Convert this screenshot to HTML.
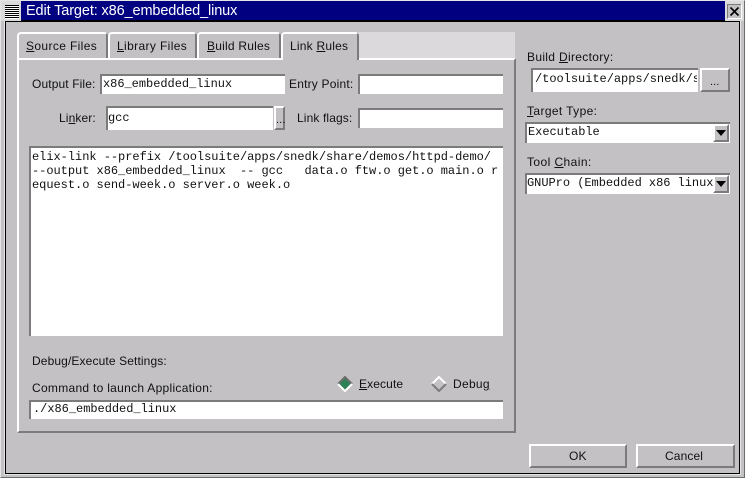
<!DOCTYPE html>
<html><head><meta charset="utf-8"><style>
html,body{margin:0;padding:0;width:745px;height:478px;overflow:hidden;background:#c3c1c4}
*{box-sizing:border-box}
.a{position:absolute}
.l{position:absolute;font:12px/14px "Liberation Sans",sans-serif;color:#111;white-space:pre;letter-spacing:.12px}
.l u{text-underline-offset:1px}
.m{position:absolute;font:12px/14px "Liberation Mono",monospace;color:#111;white-space:pre;overflow:hidden;letter-spacing:-.03px}
.in{position:absolute;background:#fff;border-top:2px solid #7c7b7c;border-left:2px solid #7c7b7c}
.btn{position:absolute;background:#c3c1c4;border:2px solid;border-color:#fff #7c7b7c #7c7b7c #fff}
.tab{position:absolute;top:32px;height:27px;background:#c3c1c4;border-top:2px solid #fff;border-left:2px solid #fff;border-right:2px solid #7c7b7c;border-radius:4px 4px 0 0}
.arr{position:absolute;width:0;height:0;border-left:5px solid transparent;border-right:5px solid transparent;border-top:6px solid #000}
</style></head><body>
<!-- window frame -->
<div class="a" style="left:0;top:0;width:745px;height:478px;border:1px solid #e6e5e6;border-right-color:#6e6d6e;border-bottom-color:#6e6d6e"></div>
<div class="a" style="left:4px;top:20px;width:737px;height:455px;border:1px solid #e6e5e6"></div>
<div class="a" style="left:5px;top:20px;width:735px;height:454px;border:1px solid #000;border-top-width:2px;background:#c3c1c4"></div>
<!-- title -->
<div class="a" style="left:21px;top:1px;width:704px;height:19px;background:#000080"></div>
<div class="l" style="left:26px;top:3px;font-size:14.5px;line-height:17px;color:#fff;letter-spacing:-.12px">Edit Target: x86_embedded_linux</div>
<!-- sys icon -->
<svg class="a" style="left:1px;top:1px" width="20" height="20"><rect width="20" height="20" fill="#dcdbdc"/><rect x="4" y="4" width="14" height="14" fill="#fff"/><path d="M4 4.5h14M4 6.5h14M4 8.5h14M4 10.5h14M4 12.5h14M4 14.5h14M4 16.5h14" stroke="#000" stroke-width="1"/></svg>
<!-- close -->
<svg class="a" style="left:725px;top:1px" width="19" height="20"><rect width="19" height="20" fill="#dcdbdc"/><rect x="2.5" y="3.5" width="14" height="14" fill="#c3c1c4" stroke="#fff"/><path d="M2.5 17.5V3.5H16" stroke="#7c7b7c" fill="none"/><path d="M5.5 6.5l8 8M13.5 6.5l-8 8" stroke="#000" stroke-width="1.6"/></svg>

<!-- panel -->
<div class="a" style="left:358px;top:32px;width:157px;height:27px;background:#dcd9dc"></div>
<div class="a" style="left:17px;top:58px;width:499px;height:375px;border:2px solid;border-color:#fff #7c7b7c #7c7b7c #fff;background:#c3c1c4"></div>
<!-- tabs -->
<div class="tab" style="left:17px;width:91px;height:26px"></div>
<div class="tab" style="left:108px;width:89px;height:26px"></div>
<div class="tab" style="left:197px;width:84px;height:26px"></div>
<div class="tab" style="left:281px;width:78px;height:28px;z-index:2"></div>
<div class="a" style="left:283px;top:57px;width:74px;height:4px;background:#c3c1c4;z-index:3"></div>
<div class="l" style="left:26px;top:39px;z-index:4;letter-spacing:.37px"><u>S</u>ource Files</div>
<div class="l" style="left:117px;top:39px;z-index:4;letter-spacing:.37px"><u>L</u>ibrary Files</div>
<div class="l" style="left:207px;top:39px;z-index:4;letter-spacing:.22px"><u>B</u>uild Rules</div>
<div class="l" style="left:290px;top:39px;z-index:4;letter-spacing:.22px">Link <u>R</u>ules</div>

<!-- row 1 -->
<div class="l" style="left:32px;top:77px">Output File:</div>
<div class="in" style="left:100px;top:74px;width:185px;height:20px"></div>
<div class="m" style="left:103px;top:77px">x86_embedded_linux</div>
<div class="l" style="left:289px;top:77px;letter-spacing:.2px">Entry Point:</div>
<div class="in" style="left:358px;top:74px;width:145px;height:20px"></div>
<!-- row 2 -->
<div class="l" style="left:59px;top:111px">Li<u>n</u>ker:</div>
<div class="in" style="left:106px;top:106px;width:167px;height:24px"></div>
<div class="m" style="left:108px;top:111px">gcc</div>
<div class="btn" style="left:274px;top:106px;width:11px;height:24px"></div>
<div class="l" style="left:276px;top:113px;font-size:11px">...</div>
<div class="l" style="left:297px;top:111px">Link flags:</div>
<div class="in" style="left:358px;top:108px;width:145px;height:20px"></div>
<!-- textarea -->
<div class="in" style="left:29px;top:146px;width:474px;height:190px"></div>
<div class="m" style="left:32px;top:150px">elix-link --prefix /toolsuite/apps/snedk/share/demos/httpd-demo/</div>
<div class="m" style="left:32px;top:164px">--output x86_embedded_linux  -- gcc   data.o ftw.o get.o main.o r</div>
<div class="m" style="left:32px;top:178px">equest.o send-week.o server.o week.o</div>
<!-- debug -->
<div class="l" style="left:32px;top:354px">Debug/Execute Settings:</div>
<div class="l" style="left:32px;top:381px;letter-spacing:.29px">Command to launch Application:</div>
<div class="in" style="left:29px;top:400px;width:474px;height:19px"></div>
<div class="m" style="left:33px;top:402px">./x86_embedded_linux</div>
<svg class="a" style="left:337px;top:376px" width="16" height="16"><path d="M8 1L15 8 8 15 1 8Z" fill="#2e8057"/><path d="M1 8L8 1 15 8" fill="none" stroke="#6e6d6e" stroke-width="2"/><path d="M1 8L8 15 15 8" fill="none" stroke="#fff" stroke-width="2"/></svg>
<div class="l" style="left:359px;top:377px"><u>E</u>xecute</div>
<svg class="a" style="left:431px;top:376px" width="16" height="16"><path d="M8 1L15 8 8 15 1 8Z" fill="#c3c1c4"/><path d="M1 8L8 1 15 8" fill="none" stroke="#fff" stroke-width="2"/><path d="M1 8L8 15 15 8" fill="none" stroke="#7c7b7c" stroke-width="2"/></svg>
<div class="l" style="left:453px;top:377px;letter-spacing:.3px">Debu<u>g</u></div>

<!-- right -->
<div class="l" style="left:527px;top:50px;letter-spacing:.32px">Build <u>D</u>irectory:</div>
<div class="in" style="left:531px;top:68px;width:167px;height:24px"></div>
<div class="m" style="left:535px;top:72px;width:162px">/toolsuite/apps/snedk/share</div>
<div class="btn" style="left:700px;top:68px;width:30px;height:24px"></div>
<div class="l" style="left:710px;top:75px;font-size:11px">...</div>
<div class="l" style="left:527px;top:104px;letter-spacing:.38px"><u>T</u>arget Type:</div>
<div class="in" style="left:525px;top:122px;width:205px;height:21px"></div>
<div class="m" style="left:528px;top:125px">Executable</div>
<div class="btn" style="left:713px;top:124px;width:16px;height:18px"></div>
<div class="arr" style="left:716px;top:130px"></div>
<div class="l" style="left:527px;top:155px;letter-spacing:.42px">Tool <u>C</u>hain:</div>
<div class="in" style="left:525px;top:173px;width:205px;height:21px"></div>
<div class="m" style="left:527px;top:176px;width:186px">GNUPro (Embedded x86 linux)</div>
<div class="btn" style="left:713px;top:175px;width:16px;height:18px"></div>
<div class="arr" style="left:716px;top:181px"></div>

<!-- buttons -->
<div class="btn" style="left:529px;top:444px;width:98px;height:24px"></div>
<div class="l" style="left:569px;top:449px">OK</div>
<div class="btn" style="left:636px;top:444px;width:99px;height:24px"></div>
<div class="l" style="left:665px;top:449px">Cancel</div>
</body></html>
